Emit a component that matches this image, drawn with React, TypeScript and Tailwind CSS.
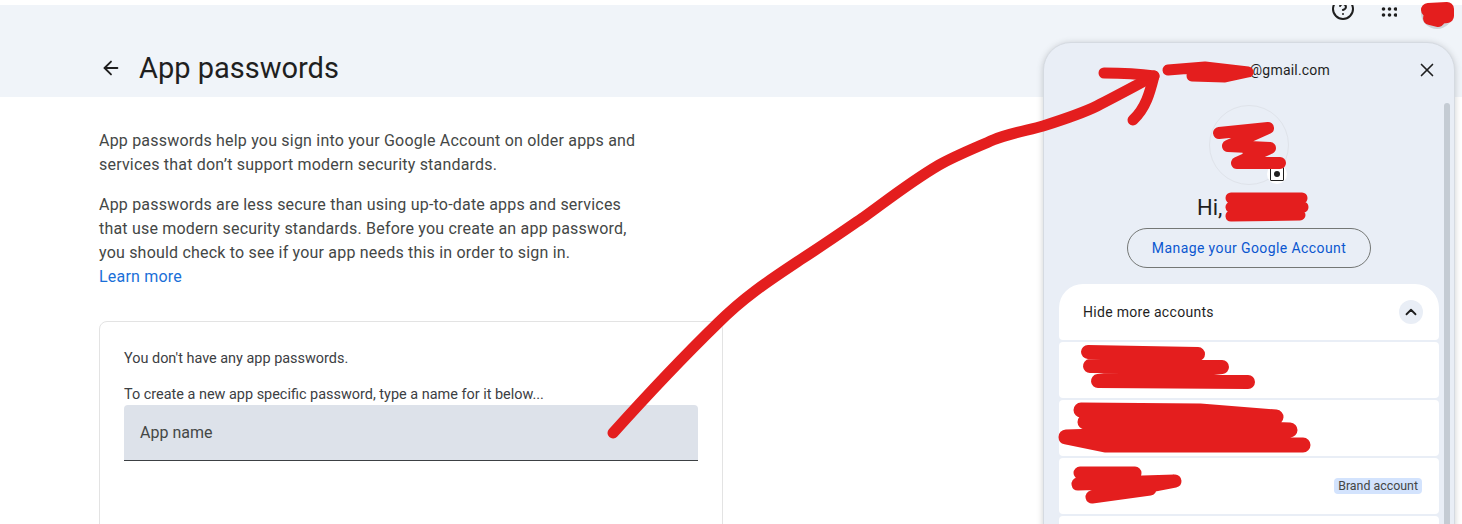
import { ArrowLeft, ChevronUp, CircleHelp, X } from "lucide-react";

const Red = "#e41e1e";

// the red marker scribbles painted over the screenshot
function Scribbles() {
  return (
    <svg className="absolute inset-0 pointer-events-none" width="1462" height="524" viewBox="0 0 1462 524" fill="none" strokeLinecap="round" strokeLinejoin="round">
      {/* long arrow */}
      <path
        d="M613 433C640 403 680 360 718 323C745 296 770 280 800 260C825 244 845 230 864 217C885 202 910 182 939 165C955 156 975 148 993 140C1010 133 1030 130 1043 126C1065 119 1085 112 1097 106C1115 97 1135 86 1154 76"
        stroke={Red}
        strokeWidth="11"
      />
      <path d="M1104 73C1120 73 1140 74 1154 76C1150 92 1146 108 1133 120" stroke={Red} strokeWidth="11" />
      {/* email */}
      <path d="M1168 70L1205 67L1248 72L1225 77L1192 76L1215 71" stroke={Red} strokeWidth="11" />
      {/* top-right avatar */}
      <path d="M1428 10L1447 9L1447 16L1430 18L1438 20" stroke={Red} strokeWidth="14" />
      {/* big avatar */}
      <path d="M1219 133L1268 128L1228 146L1270 148L1237 163L1280 163M1245 135L1250 160" stroke={Red} strokeWidth="12" />
      {/* name after Hi, */}
      <path d="M1231 198L1302 198L1231 207L1303 207L1231 216L1300 215" stroke={Red} strokeWidth="11" />
      {/* account rows */}
      <path d="M1088 352L1198 354L1090 366L1222 367L1098 381L1248 382" stroke={Red} strokeWidth="14" />
      <path d="M1081 410L1200 411L1276 417L1085 422L1290 430L1066 437L1105 445L1303 445" stroke={Red} strokeWidth="15" />
      <path d="M1080 473L1135 473L1078 484L1175 481L1092 497L1150 489L1100 486" stroke={Red} strokeWidth="13" />
    </svg>
  );
}

function AccountRow({ badge }: { badge?: boolean }) {
  return (
    <div className="h-14 bg-white rounded-[4px] flex items-center justify-end pr-[17px]">
      {badge && <span className="h-4 px-[4px] rounded-[4px] bg-[#d3e3fd] text-[#444746] text-[12.4px] leading-4">Brand account</span>}
    </div>
  );
}

function AccountPanel() {
  return (
    <div className="absolute left-[1043px] top-[42px] w-[412px] h-[520px] rounded-[28px] bg-[#e9eef6] border border-[#d5dae1] shadow-[0_1px_6px_rgba(60,64,67,0.25)] flex flex-col">
      <div className="h-[54px] flex items-center justify-end shrink-0 pr-[16px]">
        <span className="text-[14px] text-[#1f1f1f] mr-[86px] tracking-[0.2px]">@gmail.com</span>
        <X size={22} strokeWidth={1.8} className="text-[#1f1f1f]" />
      </div>

      <div className="flex flex-col items-center w-[410px] pt-[8px]">
        <div className="relative w-[80px] h-[80px] rounded-full border border-[#dfe3ea]">
          <span className="absolute right-[1px] bottom-0 w-5 h-5 rounded-full bg-white flex items-center justify-center">
            <span className="w-[14px] h-[14px] border-[1.5px] border-[#1f1f1f] rounded-[1px] flex items-center justify-center">
              <span className="w-[6px] h-[6px] rounded-full bg-[#1f1f1f]" />
            </span>
          </span>
        </div>
        <div className="h-[43px] w-full flex items-center pl-[153px] text-[22px] text-[#1f1f1f] pt-[2px]">Hi,</div>
        <div className="w-[244px] h-10 border border-[#747775] rounded-full flex items-center justify-center text-[14px] font-[450] text-[#0b57d0] tracking-[0.4px]">
          Manage your Google Account
        </div>
      </div>

      <div className="ml-[15px] w-[380px] mt-[16px] flex flex-col gap-[2px]">
        <div className="h-14 bg-white rounded-t-[24px] rounded-b-[4px] flex items-center justify-between pl-[24px] pr-[16px]">
          <span className="text-[14px] font-[450] text-[#1f1f1f] tracking-[0.3px]">Hide more accounts</span>
          <span className="w-6 h-6 rounded-full bg-[#e9eef6] flex items-center justify-center">
            <ChevronUp size={18} strokeWidth={2.4} className="text-[#1f1f1f]" />
          </span>
        </div>
        <AccountRow />
        <AccountRow />
        <AccountRow badge />
        <AccountRow />
      </div>

      {/* scrollbar */}
      <div className="absolute left-[400px] top-[60px] w-[6px] h-[460px] rounded-t-full bg-[#c4cbd3]" />
    </div>
  );
}

export default function App() {
  return (
    <div className="relative w-[1462px] h-[524px] overflow-hidden bg-white font-['Roboto',sans-serif]">
      <div className="mt-[5px] h-[92px] bg-[#f0f4f9] relative overflow-hidden">
        <div className="absolute top-[-8px] left-[1331px] flex items-start">
          <CircleHelp size={24} strokeWidth={2} className="text-[#1f1f1f]" />
          <svg width="16" height="16" viewBox="0 0 16 16" fill="#1f1f1f" className="ml-[26px] mt-[4px]">
            <circle cx="2.5" cy="8" r="1.8" /><circle cx="8.5" cy="8" r="1.8" /><circle cx="14.5" cy="8" r="1.8" />
            <circle cx="2.5" cy="14" r="1.8" /><circle cx="8.5" cy="14" r="1.8" /><circle cx="14.5" cy="14" r="1.8" />
          </svg>
          <span className="ml-[24px] w-8 h-8 rounded-full bg-[#cfd3d8]" />
        </div>
        <div className="flex items-center h-full pl-[100px] pt-[34px]">
          <ArrowLeft size={22} strokeWidth={2} className="text-[#1f1f1f]" />
          <h1 className="ml-[17px] text-[29px] text-[#1f1f1f] pt-[1px]">App passwords</h1>
        </div>
      </div>

      <div className="pl-[99px] w-[640px] pt-[32px] text-[16px] leading-6 text-[#444746] tracking-[0.2px]">
        <p>App passwords help you sign into your Google Account on older apps and services that don’t support modern security standards.</p>
        <p className="mt-4">
          App passwords are less secure than using up-to-date apps and services that use modern security standards. Before you create an app password, you should check to see if your app needs this in order to sign in.
        </p>
        <a className="block text-[#1a6fd8]">Learn more</a>
      </div>

      <div className="ml-[99px] mt-[32px] w-[624px] h-[240px] border border-[#e3e3e3] rounded-[8px] pl-[24px] pt-[27px] text-[14.45px] text-[#3c4043]">
        <p className="leading-5">You don't have any app passwords.</p>
        <p className="mt-4 leading-5">To create a new app specific password, type a name for it below...</p>
        <div className="w-[574px] h-[56px] bg-[#dde2ea] rounded-t-[4px] border-b border-[#3c4043] flex items-center pl-[16px] text-[16px] text-[#444746]">App name</div>
      </div>

      <AccountPanel />
      <Scribbles />
    </div>
  );
}
